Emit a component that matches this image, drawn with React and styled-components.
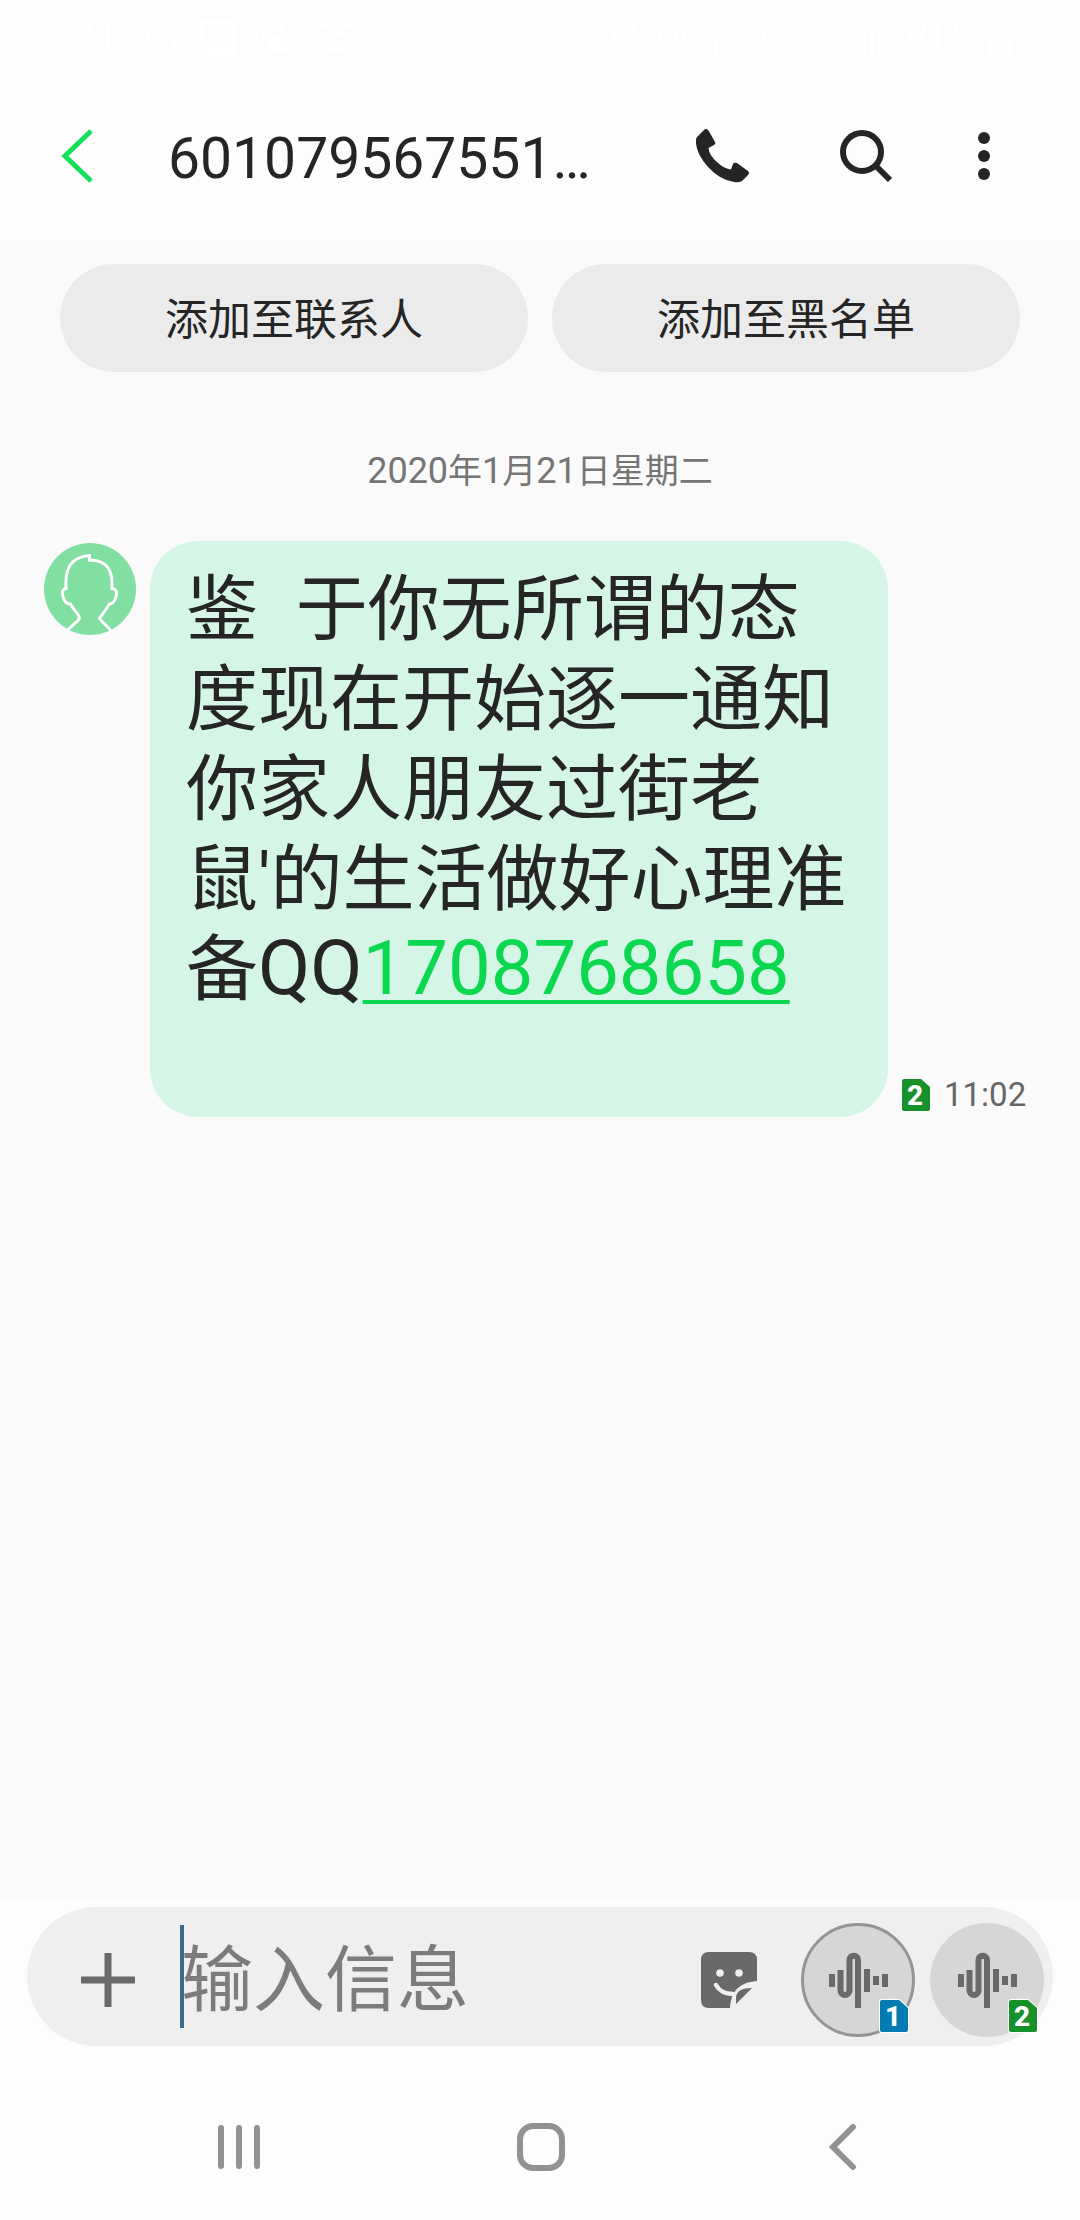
import React, { useState } from 'react';
import styled, { createGlobalStyle } from 'styled-components';

const GlobalStyle = createGlobalStyle`
  * {
    box-sizing: border-box;
  }

  body {
    margin: 0;
    background: #fafafa;
    color: #252525;
    font-family: Roboto, 'Noto Sans CJK SC', sans-serif;
  }

  button {
    padding: 0;
    border: 0;
    background: none;
    color: inherit;
    font-family: inherit;
    cursor: pointer;
  }

  svg {
    display: block;
    flex: none;
  }
`;

const Screen = styled.div`
  display: flex;
  flex-direction: column;
  min-height: 100vh;
`;

// Status bar

const StatusBar = styled.div`
  display: flex;
  align-items: center;
  justify-content: space-between;
  height: 76px;
  padding: 0 69px 0 70px;
  background: #fdfdfd;
  color: #fff;
`;

const StatusGroup = styled.div`
  display: flex;
  align-items: center;
  gap: ${({ $gap }) => $gap}px;
`;

const StatusText = styled.span`
  font-size: 44px;
  line-height: 48px;
`;

const StatusLabel = styled.span`
  font-size: 22px;
  line-height: 22px;
  font-weight: 700;
  text-align: center;
`;

const AlipayMark = styled.span`
  padding-right: 12px;
  font-size: 40px;
  line-height: 40px;
  font-weight: 700;
`;

const SignalWrapper = styled.div`
  position: relative;
  padding-left: 8px;

  ${StatusLabel} {
    position: absolute;
    top: -4px;
    left: 0;
  }
`;

// Header

const Header = styled.header`
  display: flex;
  align-items: center;
  height: 164px;
  padding: 0 76px 4px 54px;
  background: #fdfdfd;
`;

const IconButton = styled.button`
  display: flex;
  align-items: center;
  justify-content: center;
  flex: none;
  width: ${({ $width }) => $width}px;
  height: 96px;
`;

const Title = styled.h1`
  flex: 1;
  margin: 6px 0 0 68px;
  font-size: 57px;
  line-height: 68px;
  font-weight: 400;
  white-space: nowrap;
  overflow: hidden;
`;

const HeaderActions = styled.div`
  display: flex;
  align-items: center;
  gap: 53px;
`;

// Conversation

const Conversation = styled.main`
  flex: 1;
  padding-top: 24px;
`;

const QuickActions = styled.div`
  display: grid;
  grid-template-columns: 1fr 1fr;
  gap: 24px;
  padding: 0 60px;
`;

const PillButton = styled.button`
  height: 108px;
  padding-top: 4px;
  border-radius: 54px;
  background: #ebebeb;
  font-size: 43px;
  line-height: 56px;
`;

const DateLabel = styled.p`
  margin: 74px 0 44px;
  color: #757575;
  font-size: 34px;
  line-height: 51px;
  text-align: center;
`;

// latin runs are set a little larger than the hanzi beside them
const Latin = styled.span`
  font-size: ${({ $size }) => $size}px;
  line-height: 1;
`;

const MessageRow = styled.div`
  display: flex;
  align-items: flex-start;
  padding-left: 44px;
`;

const AvatarWrapper = styled.div`
  margin: 2px 14px 0 0;
`;

const Bubble = styled.div`
  flex: 1;
  padding: 24px 36px 12px;
  border-radius: 48px;
  background: #d5f5e6;
  font-size: 72px;
  line-height: 90px;
  white-space: pre-wrap;
`;

const NumberLink = styled.a`
  color: #0bd750;
  font-size: 76px;
  line-height: 1;
  text-decoration: underline;
  text-decoration-thickness: 4px;
  text-underline-offset: 6px;
  text-decoration-skip-ink: none;
`;

const MessageMeta = styled.div`
  display: flex;
  align-items: center;
  align-self: flex-end;
  flex: none;
  gap: 12px;
  width: 192px;
  padding: 0 0 0 12px;
  color: #666;
  font-size: 33px;
  line-height: 44px;
`;

// Composer

const Footer = styled.footer`
  padding: 6px 27px 0;
  background: #fdfdfd;
`;

const Composer = styled.form`
  display: flex;
  align-items: center;
  height: 139px;
  padding: 6px 9px 0 33px;
  border-radius: 70px;
  background: #efefef;
  color: #696969;
`;

const InputWrapper = styled.div`
  align-self: flex-start;
  flex: 1;
  height: 103px;
  margin: 12px 0 0 24px;
  border-left: 4px solid #3b6c8c;
`;

const MessageInput = styled.input`
  width: 100%;
  height: 103px;
  margin-left: -3px;
  padding: 8px 0 0;
  border: 0;
  outline: 0;
  background: transparent;
  color: #252525;
  font-family: inherit;
  font-size: 72px;

  &::placeholder {
    color: #7c7c7c;
    opacity: 1;
  }
`;

const VoiceButton = styled.button`
  position: relative;
  display: flex;
  align-items: center;
  justify-content: center;
  flex: none;
  width: 114px;
  height: 114px;
  margin-left: 15px;
  border: ${({ $active }) => ($active ? '3px solid #959595' : '0')};
  border-radius: 50%;
  background: #d6d6d6;
  color: #696969;
`;

const SimWrapper = styled.span`
  position: absolute;
  right: ${({ $active }) => ($active ? 2 : 5)}px;
  bottom: ${({ $active }) => ($active ? 0 : 3)}px;
`;

const StickerButton = styled(IconButton)`
  margin-right: 17px;
`;

const NavBar = styled.nav`
  display: grid;
  grid-template-columns: repeat(3, 28%);
  justify-content: center;
  justify-items: center;
  align-items: center;
  height: 174px;
  padding: 28px 0 0 2px;
  background: #fdfdfd;
  color: #929292;
`;

const SimBadge = ({ number, color, outline }) => (
  <svg width="32" height="36" viewBox="0 0 32 36" role="img" aria-label={`SIM ${number}`}>
    <path
      d="M4 2H21L30 10V32Q30 34 28 34H4Q2 34 2 32V4Q2 2 4 2Z"
      fill={color}
      stroke={outline}
      strokeWidth="2"
      paintOrder="stroke"
    />
    <text x="15" y="28" textAnchor="middle" fontFamily="Roboto" fontSize="28" fontWeight="800" fill="#fff">
      {number}
    </text>
  </svg>
);

const AvatarIcon = () => (
  <svg width="92" height="92" viewBox="0 0 92 92" aria-hidden="true">
    <circle cx="46" cy="46" r="46" fill="#82dfa2" />
    <path
      d="M22 89C29 81 34 79 35.500 75C35 71 29 66 26.500 61C21 61 18 54 18.500 49C19 47 20 45.500 22 45.500C21 29 24 14 45.500 12.500V17C65 17 69 30 68 45.500C71 45.500 73 48 72.500 51C72 57 69 61 65.500 61C62 66 59 71 55.500 75C57 79 63 82 68 89"
      fill="none"
      stroke="#fff"
      strokeWidth="3"
    />
  </svg>
);

const PhoneIcon = () => (
  <svg width="54" height="54" viewBox="0 0 54 54" fill="currentColor" aria-hidden="true">
    <path d="M1 8L8 1Q10-1 12.500 1.500L19 13Q20 15 18 16L12.500 19Q13 26 21 33Q28 40 35 40.500L37 35Q38 33 41 34L52 42Q54 44 52 46L46 52Q43 54 38 53Q24 51 12 38Q-1 23 0 11Q0 9 1 8Z" />
  </svg>
);

const SearchIcon = () => (
  <svg width="54" height="54" viewBox="0 0 54 54" fill="none" stroke="currentColor" strokeWidth="6" aria-hidden="true">
    <circle cx="23" cy="23" r="19" />
    <path d="M36 36L51 51" />
  </svg>
);

const VoiceIcon = () => (
  <svg width="60" height="56" viewBox="0 0 60 56" fill="none" stroke="currentColor" strokeWidth="6" aria-hidden="true">
    <path d="M4 22V35" />
    <path d="M12.500 18V38.500A4.500 4.500 0 0 0 21.500 38.500V8A4 4 0 0 1 30 8V56" />
    <path d="M39 17V40" />
    <path d="M48 24V33" />
    <path d="M57 22V35" />
  </svg>
);

const StickerIcon = () => (
  <svg width="56" height="56" viewBox="0 0 56 56" aria-hidden="true">
    <path
      d="M8 0H48Q56 0 56 8V29C42 30 30 36 29 56H8Q0 56 0 48V8Q0 0 8 0Z"
      fill="currentColor"
    />
    <circle cx="19" cy="21" r="3.800" fill="#efefef" />
    <circle cx="38" cy="21" r="3.800" fill="#efefef" />
    <path d="M15 33C19 40 24 42 32 42" fill="none" stroke="#efefef" strokeWidth="4.500" strokeLinecap="round" />
    <path d="M35 52V45Q36 36 51 36Z" fill="currentColor" />
  </svg>
);

const ImageIcon = () => (
  <svg width="36" height="36" viewBox="0 0 36 36" aria-hidden="true">
    <path
      d="M3 0H33Q36 0 36 3V33Q36 36 33 36H3Q0 36 0 33V3Q0 0 3 0ZM4 5V27L12 20L17 24L26 16L32 21V5ZM8 9H14V15H8Z"
      fill="currentColor"
      fillRule="evenodd"
    />
  </svg>
);

const PawIcon = () => (
  <svg width="42" height="42" viewBox="0 0 42 42" fill="currentColor" aria-hidden="true">
    <rect x="1" y="1" width="40" height="40" rx="5" fill="none" stroke="currentColor" strokeWidth="2" />
    <ellipse cx="16" cy="11" rx="3" ry="4" />
    <ellipse cx="26" cy="11" rx="3" ry="4" />
    <ellipse cx="10" cy="18" rx="3" ry="4" />
    <ellipse cx="32" cy="18" rx="3" ry="4" />
    <path d="M21 18C27 18 27 24 31 27C34 32 31 36 27 36H15C11 36 8 32 11 27C15 24 15 18 21 18Z" />
  </svg>
);

const DotsIcon = () => (
  <svg width="36" height="6" viewBox="0 0 36 6" fill="currentColor" aria-hidden="true">
    <circle cx="3" cy="3" r="3" />
    <circle cx="18" cy="3" r="3" />
    <circle cx="33" cy="3" r="3" />
  </svg>
);

const MuteIcon = () => (
  <svg width="34" height="36" viewBox="0 0 34 36" fill="currentColor" aria-hidden="true">
    <path d="M0 12L6 11L24 27V36L9 25H0ZM15 7L24 0V15Z" />
    <path d="M2 3L33 31" stroke="currentColor" strokeWidth="4" />
  </svg>
);

const SignalIcon = ({ level }) => (
  <svg width="32" height="34" viewBox="0 0 32 34" fill="currentColor" aria-hidden="true">
    {[0, 1, 2, 3, 4].map(i => (
      <rect key={i} x={i * 7} y={28 - i * 7} width="4" height={6 + i * 7} opacity={i < level ? 1 : 0.4} />
    ))}
  </svg>
);

const BatteryIcon = () => (
  <svg width="24" height="34" viewBox="0 0 24 34" fill="currentColor" aria-hidden="true">
    <path d="M8 0H16V3H24V34H0V3H8Z" opacity="0.4" />
    <rect y="21" width="24" height="13" />
  </svg>
);

const App = () => {
  const [message, setMessage] = useState('');

  return (
    <>
      <GlobalStyle />
      <Screen>
        <StatusBar>
          <StatusGroup $gap={20}>
            <StatusText>21:43</StatusText>
            <ImageIcon />
            <PawIcon />
            <AlipayMark>支</AlipayMark>
            <DotsIcon />
          </StatusGroup>
          <StatusGroup $gap={12}>
            <StatusLabel>0<br />K/s</StatusLabel>
            <MuteIcon />
            <StatusLabel>HD</StatusLabel>
            <SignalWrapper>
              <StatusLabel>4G</StatusLabel>
              <SignalIcon level={2} />
            </SignalWrapper>
            <StatusLabel>HD</StatusLabel>
            <StatusLabel>4G<br />↓↑</StatusLabel>
            <SignalIcon level={5} />
            <StatusText>40%</StatusText>
            <BatteryIcon />
          </StatusGroup>
        </StatusBar>

        <Header>
          <IconButton $width={46} aria-label="返回">
            <svg width="32" height="54" viewBox="0 0 32 54" fill="none" stroke="#12e05b" strokeWidth="5" aria-hidden="true">
              <path d="M30 2L4 27L30 52" />
            </svg>
          </IconButton>
          <Title>601079567551…</Title>
          <HeaderActions>
            <IconButton $width={90} aria-label="呼叫">
              <PhoneIcon />
            </IconButton>
            <IconButton $width={90} aria-label="搜索">
              <SearchIcon />
            </IconButton>
            <IconButton $width={40} aria-label="更多选项">
              <svg width="12" height="48" viewBox="0 0 12 48" fill="currentColor" aria-hidden="true">
                <circle cx="6" cy="6" r="6" />
                <circle cx="6" cy="24" r="6" />
                <circle cx="6" cy="42" r="6" />
              </svg>
            </IconButton>
          </HeaderActions>
        </Header>

        <Conversation>
          <QuickActions>
            <PillButton>添加至联系人</PillButton>
            <PillButton>添加至黑名单</PillButton>
          </QuickActions>

          <DateLabel>
            <Latin $size={36}>2020</Latin>年<Latin $size={36}>1</Latin>月<Latin $size={36}>21</Latin>日星期二
          </DateLabel>

          <MessageRow>
            <AvatarWrapper>
              <AvatarIcon />
            </AvatarWrapper>
            <Bubble>
              鉴<Latin $size={76}>{'  '}</Latin>于你无所谓的态度现在开始逐一通知你家人朋友过街老鼠'的生活做好心理准备<Latin $size={76}>QQ</Latin><NumberLink href="tel:1708768658">1708768658</NumberLink>
              <br />
              <br />
            </Bubble>
            <MessageMeta>
              <SimBadge number={2} color="#17912a" outline="none" />
              <time>11:02</time>
            </MessageMeta>
          </MessageRow>
        </Conversation>

        <Footer>
          <Composer onSubmit={e => e.preventDefault()}>
            <IconButton $width={96} type="button" aria-label="添加附件">
              <svg width="54" height="54" viewBox="0 0 54 54" stroke="currentColor" strokeWidth="7" aria-hidden="true">
                <path d="M27 0V54M0 27H54" />
              </svg>
            </IconButton>
            <InputWrapper>
              <MessageInput
                aria-label="输入信息"
                placeholder="输入信息"
                value={message}
                onChange={e => setMessage(e.target.value)}
              />
            </InputWrapper>
            <StickerButton $width={80} type="button" aria-label="表情贴图">
              <StickerIcon />
            </StickerButton>
            <VoiceButton type="button" $active aria-label="SIM 1 语音">
              <VoiceIcon />
              <SimWrapper $active>
                <SimBadge number={1} color="#027bb3" outline="#fff" />
              </SimWrapper>
            </VoiceButton>
            <VoiceButton type="button" aria-label="SIM 2 语音">
              <VoiceIcon />
              <SimWrapper>
                <SimBadge number={2} color="#17912a" outline="#fff" />
              </SimWrapper>
            </VoiceButton>
          </Composer>
        </Footer>

        <NavBar>
          <IconButton $width={120} aria-label="最近任务">
            <svg width="42" height="44" viewBox="0 0 42 44" fill="currentColor" aria-hidden="true">
              <rect x="0" width="6" height="44" rx="3" />
              <rect x="18" width="6" height="44" rx="3" />
              <rect x="36" width="6" height="44" rx="3" />
            </svg>
          </IconButton>
          <IconButton $width={120} aria-label="主屏幕">
            <svg width="48" height="48" viewBox="0 0 48 48" fill="none" stroke="currentColor" strokeWidth="6" aria-hidden="true">
              <rect x="3" y="3" width="42" height="42" rx="13" />
            </svg>
          </IconButton>
          <IconButton $width={120} aria-label="后退">
            <svg width="28" height="46" viewBox="0 0 28 46" fill="none" stroke="currentColor" strokeWidth="6" strokeLinecap="round" aria-hidden="true">
              <path d="M24 3L4 23L24 43" />
            </svg>
          </IconButton>
        </NavBar>
      </Screen>
    </>
  );
};

export default App;
